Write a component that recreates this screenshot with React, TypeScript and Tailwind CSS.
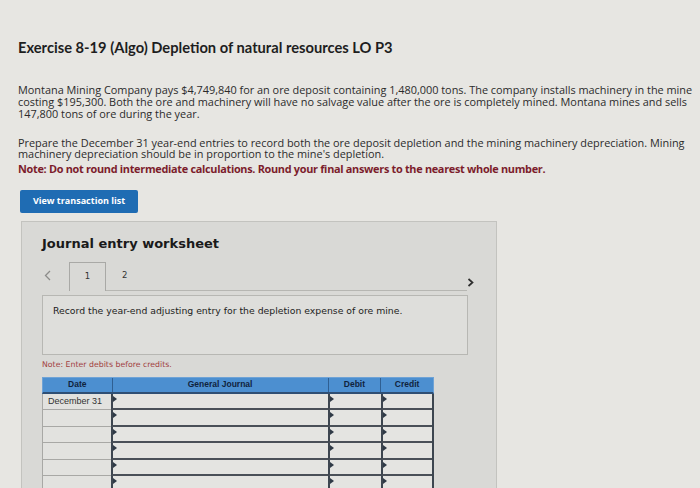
import React from "react";

const ROWS = ["December 31", "", "", "", "", ""];

function InputCell({ w }: { w: string }) {
  return (
    <div className={`relative h-full ${w} border-l-2 border-b-2 border-l-[#3d4650] border-b-[#4a5058] bg-[#e4e4e1]`}>
      <span className="absolute left-0 top-[2px] h-0 w-0 border-y-[3px] border-l-[4px] border-y-transparent border-l-[#2f3a46]" />
    </div>
  );
}

export default function App() {
  return (
    <div
      className="h-[488px] w-[700px] overflow-hidden bg-[#e7e6e2] pl-[18px] pt-[37px] text-[#2b2b2b]"
      style={{ fontFamily: '"Open Sans", "Liberation Sans", sans-serif' }}
    >
      <h1
        className="text-[14.7px] font-bold leading-[20px] text-[#1e1e1e]"
        style={{ fontFamily: 'Lato, "Liberation Sans", sans-serif' }}
      >
        Exercise 8-19 (Algo) Depletion of natural resources LO P3
      </h1>

      <p className="mt-[27px] pr-[4px] text-[10.9px] leading-[12px]">
        Montana Mining Company pays $4,749,840 for an ore deposit containing 1,480,000 tons. The company installs machinery in the mine
        costing $195,300. Both the ore and machinery will have no salvage value after the ore is completely mined. Montana mines and sells
        147,800 tons of ore during the year.
      </p>

      <p className="mt-[16.5px] pr-[4px] text-[10.9px] leading-[11.5px]">
        Prepare the December 31 year-end entries to record both the ore deposit depletion and the mining machinery depreciation. Mining
        machinery depreciation should be in proportion to the mine's depletion.
      </p>
      <p className="mt-[3.5px] text-[10.9px] font-bold leading-[12px] tracking-[-0.3px] text-[#7c1d2c]">
        Note: Do not round intermediate calculations. Round your final answers to the nearest whole number.
      </p>

      <button className="ml-[2px] mt-[14.5px] flex h-[23px] w-[118px] items-center justify-center rounded-[2px] bg-[#1f6cb3] text-[9px] font-bold text-white">
        View transaction list
      </button>

      <div
        className="ml-[3px] mt-[8px] h-[300px] w-[476px] border border-[#c3c3bf] bg-[#d9d9d6] pl-[20px] pt-[14px]"
        style={{ fontFamily: '"DejaVu Sans", Verdana, sans-serif' }}
      >
        <h2 className="text-[13px] font-bold leading-[16px] text-[#1a1a1a]">Journal entry worksheet</h2>

        <div className="mt-[10px] flex h-[29px] w-[433px] items-end">
          <div className="mb-[10px] flex w-[27px] pl-[2px]">
            <svg width="7" height="11" viewBox="0 0 7 11" fill="none">
              <path d="M6 1 L1.5 5.5 L6 10" stroke="#8c8c8a" strokeWidth="1.3" />
            </svg>
          </div>
          <div className="flex h-[29px] w-[37px] items-center justify-center border border-b-0 border-[#a9a9a6] text-[8.5px] text-[#333]">
            1
          </div>
          <div className="flex h-full flex-1 flex-col">
            <div className="flex flex-1 items-center pl-[16px] text-[8.5px] text-[#333]">2</div>
            <div className="h-px w-full bg-[#b6b6b2]" />
          </div>
          <div className="flex w-[8px] self-center pt-[12px]">
            <svg width="7" height="9" viewBox="0 0 7 9" fill="none">
              <path d="M1.5 1 L5.5 4.5 L1.5 8" stroke="#2e2e2e" strokeWidth="1.7" />
            </svg>
          </div>
        </div>

        <div className="mt-[4px] h-[60px] w-[426px] border border-[#b7b7b3] bg-[#dededb] pl-[10px] pt-[8px] text-[9.3px] text-[#222]">
          Record the year-end adjusting entry for the depletion expense of ore mine.
        </div>

        <p className="mt-[5px] text-[7.8px] leading-[9px] text-[#a2413f]">Note: Enter debits before credits.</p>

        <div className="mt-[8px] w-[392px]" style={{ fontFamily: '"Liberation Sans", Arial, sans-serif' }}>
          <div className="flex h-[17px] border border-b-2 border-[#6fa3d6] border-b-[#2f4f74] bg-[#4c8fd0] text-[8.5px] font-bold text-[#10233d]">
            <div className="flex w-[69px] items-center justify-center">Date</div>
            <div className="flex w-[217px] items-center justify-center border-l border-[#2f5f92]">General Journal</div>
            <div className="flex w-[53px] items-center justify-center border-l border-[#2f5f92]">Debit</div>
            <div className="flex w-[53px] items-center justify-center border-l border-[#2f5f92]">Credit</div>
          </div>
          {ROWS.map((d, i) => (
            <div key={i} className="flex h-[16.5px]">
              <div className="flex h-full w-[69px] items-center border-b border-l border-[#a8a8a5] bg-[#e2e2df] pl-[5px] text-[9px] text-[#333]">
                {d}
              </div>
              <InputCell w="w-[217px]" />
              <InputCell w="w-[53px]" />
              <div className="h-full w-[53px] border-r-2 border-[#3d4650]">
                <InputCell w="w-full" />
              </div>
            </div>
          ))}
        </div>
      </div>
    </div>
  );
}
